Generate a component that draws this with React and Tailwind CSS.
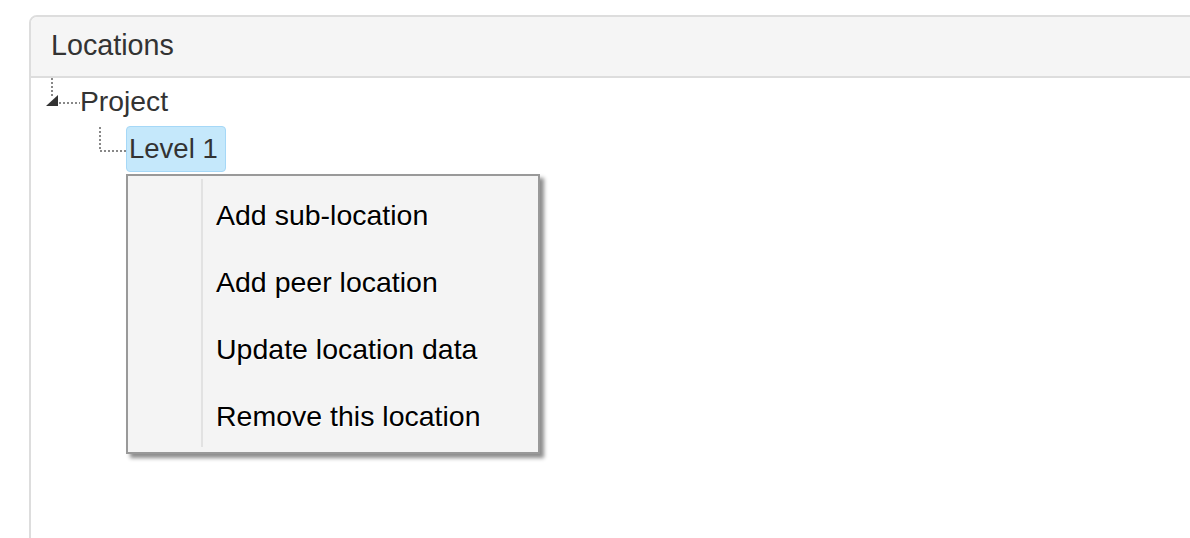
import React from 'react'

const menuItems = ['Add sub-location', 'Add peer location', 'Update location data', 'Remove this location']

// Connecteur pointillé du nœud racine (avec le triangle "ouvert")
function RootConnector() {
  return (
    <svg width="36" height="48" viewBox="0 0 36 48" className="shrink-0">
      <line x1="8" y1="0" x2="8" y2="18" stroke="#888" strokeWidth="2" strokeDasharray="2 2" />
      <polygon points="2,28 14,17 14,28" fill="#333" />
      <line x1="15" y1="25" x2="36" y2="25" stroke="#888" strokeWidth="2" strokeDasharray="2 2" />
    </svg>
  )
}

function LeafConnector() {
  return (
    <svg width="30" height="48" viewBox="0 0 30 48" className="shrink-0">
      <path d="M4 1 V25 H30" fill="none" stroke="#888" strokeWidth="2" strokeDasharray="2 2" />
    </svg>
  )
}

function ContextMenu() {
  return (
    <div className="absolute left-0 top-[48px] z-10 flex w-[414px] border-2 border-[#999] bg-[#f4f4f4] shadow-[4px_4px_4px_rgba(0,0,0,0.45)]">
      <div className="my-[3px] ml-[73px] mb-[5px] w-[2px] shrink-0 bg-[#e2e2e2]" />
      <div className="flex flex-col pt-[6px] pb-[2px] pl-[13px]">
        {menuItems.map((item) => (
          <div
            key={item}
            className="flex h-[67px] items-center text-[28.5px] text-black [text-shadow:1px_1px_0_#fff]"
          >
            {item}
          </div>
        ))}
      </div>
    </div>
  )
}

export default function App() {
  return (
    <div className="h-[538px] w-[1190px] overflow-hidden bg-white pl-[29px] pt-[15px] font-['Liberation_Sans',Arial,sans-serif] text-[#333]">
      <div className="h-[600px] w-[1200px] rounded-tl-[8px] border-2 border-[#ddd]">
        <div className="flex h-[61px] items-center rounded-tl-[6px] border-b-2 border-[#ddd] bg-[#f5f5f5] pb-[2px] pl-[20px] text-[28.7px]">
          Locations
        </div>

        <div className="flex flex-col">
          <div className="flex h-[48px] items-start pl-[13px]">
            <RootConnector />
            <span className="mt-[6px] text-[28.3px] leading-[34px]">Project</span>
          </div>

          <div className="flex h-[49px] items-start pl-[65px]">
            <LeafConnector />
            <div className="relative">
              <div className="h-[46px] w-[100px] rounded-[4px] border border-[#a6d8f7] bg-[#c5e8fb] pl-[2px] text-[27.5px] leading-[44px]">
                Level 1
              </div>
              <ContextMenu />
            </div>
          </div>
        </div>
      </div>
    </div>
  )
}
